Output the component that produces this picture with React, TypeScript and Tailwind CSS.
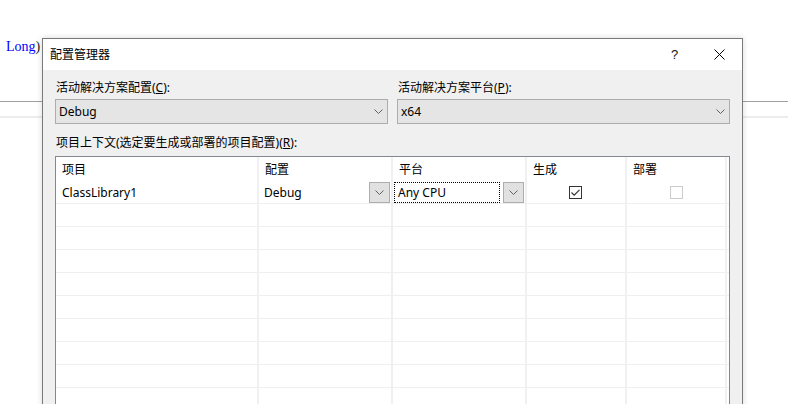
import React from "react";

const font = "font-['Noto_Sans','Noto_Sans_CJK_SC',sans-serif]";

function Chevron() {
  return (
    <svg width="9" height="5" viewBox="0 0 9 5" fill="none">
      <path d="M0.5 0.5 L4.5 4.5 L8.5 0.5" stroke="#606060" strokeWidth="1" />
    </svg>
  );
}

function ComboBox({ value }: { value: string }) {
  return (
    <div className="flex h-[25px] w-[333px] items-center justify-between border border-[#adadad] bg-[#e5e5e5] pl-[3px] pr-[4px]">
      <span className="text-[12px] leading-[16px] text-black">{value}</span>
      <Chevron />
    </div>
  );
}

function CellButton() {
  return (
    <div className="flex h-[21px] w-[21px] items-center justify-center border border-[#adadad] bg-[#e1e1e1]">
      <Chevron />
    </div>
  );
}

function CheckBox({ checked, disabled }: { checked?: boolean; disabled?: boolean }) {
  return (
    <div
      className={
        disabled
          ? "flex h-[13px] w-[13px] items-center justify-center border border-[#cccccc] bg-white"
          : "flex h-[13px] w-[13px] items-center justify-center border border-[#333333] bg-white"
      }
    >
      {checked && (
        <svg width="11" height="11" viewBox="0 0 11 11" fill="none">
          <path d="M1.5 5.5 L4.2 8.2 L9.5 2.8" stroke="#333333" strokeWidth="1.2" />
        </svg>
      )}
    </div>
  );
}

const cols = ["w-[203px]", "w-[134px]", "w-[134px]", "w-[100px]", "w-[100px]"];
const headers = ["项目", "配置", "平台", "生成", "部署"];

export default function App() {
  return (
    <div className={`relative h-[404px] w-[788px] overflow-hidden bg-white ${font}`}>
      {/* editor behind the dialog */}
      <div className="flex flex-col">
        <div className="h-[38px]" />
        <div className="h-[18px] pl-[6px] font-['Liberation_Serif',serif] text-[14px] leading-[18px]">
          <span className="text-[#0000ff]">Long</span>
          <span className="text-[#222]">)</span>
        </div>
        <div className="h-[45px]" />
        <div className="h-px bg-[#a0a0a0]" />
        <div className="h-[14px]" />
        <div className="h-[2px] bg-[#ececec]" />
      </div>

      {/* dialog window */}
      <div className="absolute left-[42px] top-[38px] flex h-[400px] w-[701px] flex-col border border-[#7a7a7a] shadow-[0_0_6px_rgba(0,0,0,0.15)]">
        <div className="flex h-[31px] items-center bg-white">
          <span className="flex-1 pl-[7px] text-[12px] leading-[16px] text-black">配置管理器</span>
          <div className="flex h-full w-[45px] items-center justify-center font-['Liberation_Sans',sans-serif] text-[13px] text-[#111]">?</div>
          <div className="flex h-full w-[45px] items-center justify-center">
            <svg width="11" height="11" viewBox="0 0 11 11" fill="none">
              <path d="M0.5 0.5 L10.5 10.5 M10.5 0.5 L0.5 10.5" stroke="#000" strokeWidth="1" />
            </svg>
          </div>
        </div>

        <div className="flex flex-1 flex-col bg-[#f0f0f0] px-[12px] pt-[10px]">
          <div className="flex gap-[9px]">
            <div className="flex flex-col">
              <div className="h-[16px] pl-px text-[12px] leading-[16px] text-black">
                活动解决方案配置(<span className="underline">C</span>):
              </div>
              <div className="mt-[3px]">
                <ComboBox value="Debug" />
              </div>
            </div>
            <div className="flex flex-col">
              <div className="h-[16px] pl-px text-[12px] leading-[16px] text-black">
                活动解决方案平台(<span className="underline">P</span>):
              </div>
              <div className="mt-[3px]">
                <ComboBox value="x64" />
              </div>
            </div>
          </div>

          <div className="mt-[11px] h-[16px] pl-px text-[12px] leading-[16px] text-black">
            项目上下文(选定要生成或部署的项目配置)(<span className="underline">R</span>):
          </div>

          <div className="mt-[5px] flex-1 border border-[#828790] bg-white">
            <div className="flex h-[24px]">
              {headers.map((h, i) => (
                <div
                  key={h}
                  className={`${cols[i]} flex items-center border-r-2 border-[#eef0f3] pl-[6px] pt-px text-[12px] leading-[16px] text-black`}
                >
                  {h}
                </div>
              ))}
            </div>

            <div className="flex h-[23px] border-b border-[#efefef]">
              <div className={`${cols[0]} flex items-center border-r-2 border-[#eef0f3] pl-[6px] pt-[2px] text-[12px] text-black`}>
                ClassLibrary1
              </div>
              <div className={`${cols[1]} flex items-center justify-between border-r-2 border-[#eef0f3] pl-[5px] pr-px text-[12px] text-black`}>
                <span className="pt-[2px]">Debug</span>
                <CellButton />
              </div>
              <div className={`${cols[2]} flex items-center justify-between border-r-2 border-[#eef0f3] pl-px pr-px text-[12px] text-black`}>
                <div className="flex h-[21px] w-[106px] items-center border border-dotted border-black pl-[3px] pt-px">
                  Any CPU
                </div>
                <CellButton />
              </div>
              <div className={`${cols[3]} flex items-center justify-center border-r-2 border-[#eef0f3] pr-px`}>
                <CheckBox checked />
              </div>
              <div className={`${cols[4]} flex items-center justify-center border-r-2 border-[#eef0f3]`}>
                <CheckBox disabled />
              </div>
            </div>

            {Array.from({ length: 10 }).map((_, r) => (
              <div key={r} className="flex h-[23px] border-b border-[#efefef]">
                {cols.map((c, i) => (
                  <div key={i} className={`${c} border-r-2 border-[#eef0f3]`} />
                ))}
              </div>
            ))}
          </div>
        </div>
      </div>
    </div>
  );
}
